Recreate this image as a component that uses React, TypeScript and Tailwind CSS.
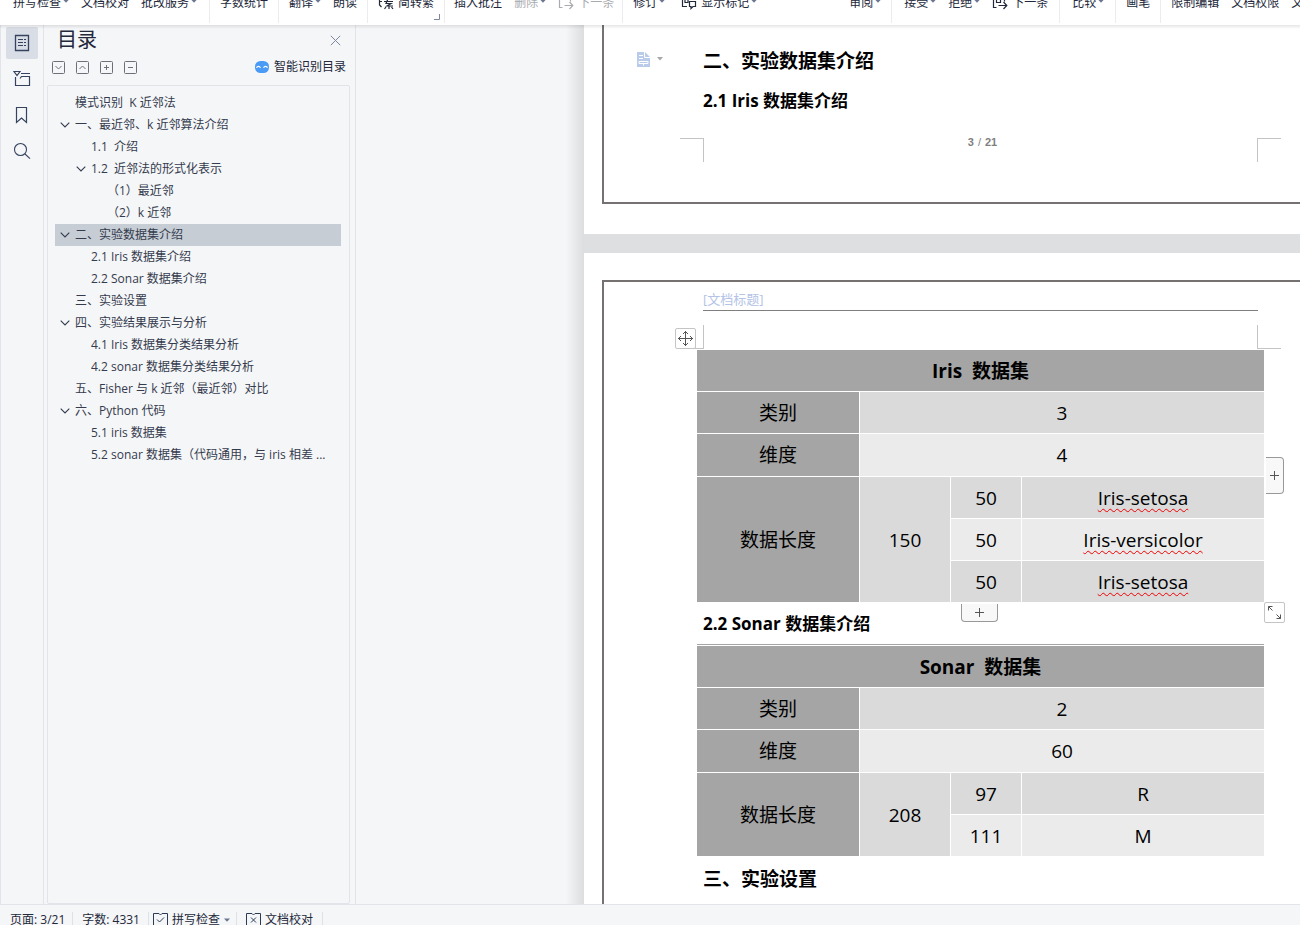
import React, { useState } from 'react';
import clsx from 'clsx';

interface OutlineItem {
  title: string;
  level: 1 | 2 | 3;
  expandable?: boolean;
}

const outline: OutlineItem[] = [
  { title: '模式识别  K 近邻法', level: 1 },
  { title: '一、最近邻、k 近邻算法介绍', level: 1, expandable: true },
  { title: '1.1  介绍', level: 2 },
  { title: '1.2  近邻法的形式化表示', level: 2, expandable: true },
  { title: '（1）最近邻', level: 3 },
  { title: '（2）k 近邻', level: 3 },
  { title: '二、实验数据集介绍', level: 1, expandable: true },
  { title: '2.1 Iris 数据集介绍', level: 2 },
  { title: '2.2 Sonar 数据集介绍', level: 2 },
  { title: '三、实验设置', level: 1 },
  { title: '四、实验结果展示与分析', level: 1, expandable: true },
  { title: '4.1 Iris 数据集分类结果分析', level: 2 },
  { title: '4.2 sonar 数据集分类结果分析', level: 2 },
  { title: '五、Fisher 与 k 近邻（最近邻）对比', level: 1 },
  { title: '六、Python 代码', level: 1, expandable: true },
  { title: '5.1 iris 数据集', level: 2 },
  { title: '5.2 sonar 数据集（代码通用，与 iris 相差 ...', level: 2 },
];

const indent = { 1: 'pl-0', 2: 'pl-4', 3: 'pl-8' };

/* ---------- Icons ---------- */

const Caret = () => (
  <svg width="6" height="4" viewBox="0 0 6 4" className="shrink-0" aria-hidden="true">
    <path d="M0 .5h6L3 3.8z" fill="#6b7590" />
  </svg>
);

const NextIcon = ({ marked = false }: { marked?: boolean }) => (
  <svg width="16" height="16" viewBox="0 0 16 16" fill="none" stroke="currentColor" strokeWidth="1.2" aria-hidden="true">
    <path d="M4.5 12.5h-3v-11h11v5M6.5 10.5h8M11.5 7l3.3 3.5-3.3 3.5" />
    {marked && <path d="M4.5 3.5h4v4h-4z" />}
  </svg>
);

const MarkupIcon = () => (
  <svg width="16" height="16" viewBox="0 0 16 16" fill="none" stroke="currentColor" strokeWidth="1.2" aria-hidden="true">
    <path d="M6 11.5H1.5v-10h13v2M4 4.5h3v3H4zM8.5 6.5h6v5h-2.5l-2 2v-2H8.5z" />
  </svg>
);

const ConvertIcon = () => (
  <svg width="16" height="16" viewBox="0 0 16 16" fill="none" stroke="currentColor" strokeWidth="1.2" aria-hidden="true">
    <path d="M1.5 1v9l2 2M1 6.5h3M6 3.5h9M6 6.5h9M11 1.5 8 8.5h5l-4 2.5h6M11 11v3M8 12l-1.5 2M13.5 12l1.5 2" />
  </svg>
);

const OutlineIcon = () => (
  <svg width="18" height="18" viewBox="0 0 18 18" fill="none" stroke="currentColor" aria-hidden="true">
    <path d="M2.5 1.5h13v15h-13z" strokeWidth="1.3" />
    <path d="M5 5.5h5M11 5.5h2M5 8.5h5M11 8.5h2M5 11.5h5M11 11.5h2" strokeWidth="1.2" />
  </svg>
);

const ChapterIcon = () => (
  <svg width="18" height="18" viewBox="0 0 18 18" fill="none" stroke="currentColor" strokeWidth="1.2" aria-hidden="true">
    <path d="M1 1.5h6l-3 4zM8 3.5h9M2.5 7v8.5h14v-9h-8l-1.5 2" />
  </svg>
);

const BookmarkIcon = () => (
  <svg width="18" height="18" viewBox="0 0 18 18" fill="none" stroke="currentColor" strokeWidth="1.2" aria-hidden="true">
    <path d="M3.5 1.5h10v15l-5-4.5-5 4.5z" />
  </svg>
);

const SearchIcon = () => (
  <svg width="18" height="18" viewBox="0 0 18 18" fill="none" stroke="currentColor" strokeWidth="1.1" aria-hidden="true">
    <circle cx="7.5" cy="7.5" r="6" />
    <path d="m12 12 5 4.7" />
  </svg>
);

const BoxIcon = ({ d }: { d: string }) => (
  <svg width="13" height="13" viewBox="0 0 13 13" fill="none" stroke="#6d7078" aria-hidden="true">
    <rect x=".5" y=".5" width="12" height="12" rx="1" />
    <path d={d} />
  </svg>
);

const SmartIcon = () => (
  <svg width="14" height="12" viewBox="0 0 14 12" aria-hidden="true">
    <rect width="14" height="12" rx="5.5" fill="#4a9bf5" />
    <path d="M1.5 6.8c.8-1.8 3-1.8 4 0M8.5 6.8c1-1.8 3.200-1.800 4 0" stroke="#fff" strokeWidth="1.2" fill="none" />
  </svg>
);

const CheckBookIcon = ({ mark }: { mark: string }) => (
  <svg width="15" height="13" viewBox="0 0 15 13" fill="none" stroke="#2c3a55" aria-hidden="true">
    <path d="M6 .5H.5v12h14V.5H9L7.500 2z" />
    <path d={mark} />
  </svg>
);

/* ---------- Toolbar ---------- */

interface ToolProps {
  label: string;
  caret?: boolean;
  icon?: React.ReactNode;
  muted?: boolean;
  className?: string;
}

const Tool: React.FC<ToolProps> = ({ label, caret, icon, muted, className }) => (
  <button
    type="button"
    className={clsx(
      'flex h-6 shrink-0 items-center whitespace-nowrap',
      muted ? 'text-[#a9abb0]' : 'text-[#23283a]',
      className
    )}
  >
    {icon && <span className="mr-1">{icon}</span>}
    {label}
    {caret && (
      <span className="mb-1 ml-0.5">
        <Caret />
      </span>
    )}
  </button>
);

const ToolGroup = ({ children, className = 'px-[10px]' }: { children: React.ReactNode; className?: string }) => (
  <div className={clsx('flex h-8 shrink-0 gap-3 border-r border-[#ececee]', className)}>{children}</div>
);

const Toolbar = () => (
  <header className="z-20 h-[25px] shrink-0 overflow-hidden bg-white">
    <div className="-mt-[9px] flex">
      <ToolGroup className="pl-[13px] pr-3">
        <Tool label="拼写检查" caret />
        <Tool label="文档校对" />
        <Tool label="批改服务" caret />
      </ToolGroup>
      <ToolGroup>
        <Tool label="字数统计" />
      </ToolGroup>
      <ToolGroup>
        <Tool label="翻译" caret />
        <Tool label="朗读" />
      </ToolGroup>
      <ToolGroup className="relative px-[10px]">
        <Tool label="简转繁" icon={<ConvertIcon />} />
        <svg className="absolute bottom-[3px] right-1" width="6" height="6" viewBox="0 0 6 6" fill="none" stroke="#7d869c" aria-hidden="true">
          <path d="M0 5.5h5.5V0" />
        </svg>
      </ToolGroup>
      <ToolGroup className="pl-[9px] pr-2">
        <Tool label="插入批注" />
        <Tool label="删除" caret muted />
        <Tool label="下一条" icon={<NextIcon />} muted />
      </ToolGroup>
      <ToolGroup>
        <Tool label="修订" caret />
        <Tool label="显示标记" caret icon={<MarkupIcon />} className="ml-1" />
        <Tool label="审阅" caret className="ml-20" />
      </ToolGroup>
      <ToolGroup className="pl-3 pr-[11px]">
        <Tool label="接受" caret />
        <Tool label="拒绝" caret />
        <Tool label="下一条" icon={<NextIcon marked />} />
      </ToolGroup>
      <ToolGroup className="pl-3 pr-[11px]">
        <Tool label="比较" caret />
      </ToolGroup>
      <ToolGroup>
        <Tool label="画笔" />
      </ToolGroup>
      <ToolGroup>
        <Tool label="限制编辑" />
        <Tool label="文档权限" />
        <Tool label="文档认证" />
      </ToolGroup>
    </div>
  </header>
);

/* ---------- Sidebar ---------- */

const railItems = [
  { name: '目录', icon: <OutlineIcon /> },
  { name: '章节', icon: <ChapterIcon /> },
  { name: '书签', icon: <BookmarkIcon /> },
  { name: '查找', icon: <SearchIcon /> },
];

const Rail = () => (
  <nav className="flex w-11 shrink-0 flex-col items-center gap-1 border-x border-[#e2e4ea] pt-0.5">
    {railItems.map((item, i) => (
      <button
        key={item.name}
        type="button"
        aria-label={item.name}
        className={clsx('flex size-8 items-center justify-center text-[#36435f]', i === 0 && 'rounded-xs bg-[#d9dde5]')}
      >
        {item.icon}
      </button>
    ))}
  </nav>
);

const OutlinePanel = () => {
  const [selected, setSelected] = useState(6);

  return (
    <aside className="flex w-[312px] shrink-0 flex-col border-r border-[#e2e4ea]">
      <div className="flex h-[30px] items-center justify-between pl-[13px] pr-[14px]">
        <h1 className="text-xl leading-[30px] text-[#23283a]">目录</h1>
        <button type="button" aria-label="关闭">
          <svg width="11" height="11" viewBox="0 0 11 11" stroke="#7d869c" aria-hidden="true">
            <path d="m.8.8 9.4 9.4M10.2.8.8 10.2" />
          </svg>
        </button>
      </div>
      <div className="flex h-[30px] items-center gap-[11px] pb-1.5 pl-2 pr-[9px]">
        <button type="button" aria-label="展开"><BoxIcon d="m3.5 5 3 3 3-3" /></button>
        <button type="button" aria-label="收起"><BoxIcon d="m3.5 8 3-3 3 3" /></button>
        <button type="button" aria-label="增加"><BoxIcon d="M4 6.5h5M6.5 4v5" /></button>
        <button type="button" aria-label="减少"><BoxIcon d="M4 6.5h5" /></button>
        <button type="button" className="ml-auto flex items-center gap-[5px] text-[#23283a]">
          <SmartIcon />
          智能识别目录
        </button>
      </div>
      <ul className="ml-[3px] mr-[5px] flex-1 overflow-hidden rounded-xs border border-[#e2e4ea] px-[7px] pt-1.5">
        {outline.map((item, i) => (
          <li key={item.title}>
            <button
              type="button"
              onClick={() => setSelected(i)}
              className={clsx(
                'flex h-[22px] w-[286px] items-center text-left text-[#343b4d]',
                indent[item.level],
                selected === i && 'bg-[#c6cdd5]'
              )}
            >
              <span className="flex w-5 shrink-0 justify-center">
                {item.expandable && (
                  <svg width="10" height="6" viewBox="0 0 10 6" fill="none" stroke="#343b4d" strokeWidth="1.1" aria-hidden="true">
                    <path d="m.7.7 4.3 4.3L9.3.7" />
                  </svg>
                )}
              </span>
              <span className="truncate whitespace-pre">{item.title}</span>
            </button>
          </li>
        ))}
      </ul>
    </aside>
  );
};

/* ---------- Document ---------- */

const CropMark = ({ className }: { className: string }) => (
  <div className={clsx('size-6 shrink-0 border-[#c4c4c4]', className)} />
);

interface DataTableProps {
  title: string;
  classes: string;
  dims: string;
  total: string;
  parts: { count: string; name: string; misspelled?: boolean }[];
}

const cell = 'border-white p-0 font-normal';

const DataTable: React.FC<DataTableProps> = ({ title, classes, dims, total, parts }) => (
  <table className="w-[567px] table-fixed border-separate border-spacing-0 text-center text-[19px] leading-6 text-black">
    <colgroup>
      <col className="w-[163px]" />
      <col className="w-[91px]" />
      <col className="w-[71px]" />
      <col />
    </colgroup>
    <thead>
      <tr className="h-[42px]">
        <th colSpan={4} className="whitespace-pre border-b border-white bg-[#a5a5a5] p-0 font-bold">{title}</th>
      </tr>
    </thead>
    <tbody>
      <tr className="h-[42px]">
        <th scope="row" className={clsx(cell, 'border-b border-r bg-[#a5a5a5]')}>类别</th>
        <td colSpan={3} className={clsx(cell, 'border-b bg-[#dadada]')}>{classes}</td>
      </tr>
      <tr className="h-[43px]">
        <th scope="row" className={clsx(cell, 'border-b border-r bg-[#a5a5a5]')}>维度</th>
        <td colSpan={3} className={clsx(cell, 'border-b bg-[#ebebeb]')}>{dims}</td>
      </tr>
      {parts.map((part, i) => {
        const last = i === parts.length - 1;
        const tone = i % 2 === 0 ? 'bg-[#dadada]' : 'bg-[#ebebeb]';
        return (
          <tr key={i} className={last ? 'h-[41px]' : 'h-[42px]'}>
            {i === 0 && (
              <>
                <th scope="row" rowSpan={parts.length} className={clsx(cell, 'border-r bg-[#a5a5a5]')}>数据长度</th>
                <td rowSpan={parts.length} className={clsx(cell, 'border-r bg-[#dadada]')}>{total}</td>
              </>
            )}
            <td className={clsx(cell, 'border-r', tone, !last && 'border-b')}>{part.count}</td>
            <td className={clsx(cell, tone, !last && 'border-b')}>
              <span className={clsx(part.misspelled && 'underline decoration-[#f00000] decoration-wavy decoration-1 underline-offset-3')}>
                {part.name}
              </span>
            </td>
          </tr>
        );
      })}
    </tbody>
  </table>
);

const PlusIcon = () => (
  <svg width="9" height="9" viewBox="0 0 9 9" stroke="#555" aria-hidden="true">
    <path d="M0 4.5h9M4.5 0v9" />
  </svg>
);

const Document = () => (
  <main className="flex min-w-0 flex-1 overflow-hidden">
    <div className="w-[210px] shrink-0" />
    <div className="w-[18px] shrink-0 bg-linear-to-r from-[#f5f6f8] to-[#dcdddf]" />
    <div className="flex min-w-0 flex-1 flex-col gap-[19px] bg-[#dedfe1]">
      <section className="shrink-0 bg-white pb-[30px] pl-[18px]">
        <div className="border-b-2 border-l-2 border-[#767171] pb-10 pt-5">
          <div className="flex items-center">
            <button type="button" aria-label="段落选项" className="flex w-[99px] items-center gap-[7px] pb-1 pl-[33px]">
              <svg width="13" height="15" viewBox="0 0 13 15" aria-hidden="true">
                <path d="M0 0h8l5 5v10H0z" fill="#b9cbe8" />
                <path d="M7.500 0v5.500H13M2 3.5h4M2 6.5h4M2 9.5h9v2H2zM6.500 11.500v2" fill="none" stroke="#fff" />
              </svg>
              <svg width="6" height="4" viewBox="0 0 6 4" aria-hidden="true">
                <path d="M0 0h6L3 3.5z" fill="#a8a8a8" />
              </svg>
            </button>
            <h2 className="text-[19px] font-bold leading-8 text-black">二、实验数据集介绍</h2>
          </div>
          <h3 className="mt-2 pl-[99px] text-[17px] font-bold leading-8 text-black">2.1 Iris 数据集介绍</h3>
          <div className="ml-[76px] mt-[21px] flex w-[601px] justify-between">
            <CropMark className="border-r border-t" />
            <p className="flex h-2 items-center gap-1 pl-1 font-['Liberation_Sans',sans-serif] text-[11px] text-[#7f7f7f]">
              <span className="font-bold">3</span>/<span className="font-bold">21</span>
            </p>
            <CropMark className="border-l border-t" />
          </div>
        </div>
      </section>

      <section className="flex flex-1 flex-col bg-white pl-[18px] pt-[27px]">
        <div className="flex-1 border-l-2 border-t-2 border-[#767171]">
          <div className="ml-[76px] w-[601px]">
            <div className="mx-[23px] border-b border-[#7f7f7f] pb-px pt-2 text-[13px] leading-[19px] text-[#b4c3e6]">[文档标题]</div>
            <div className="mt-3.5 flex justify-between">
              <CropMark className="border-b border-r" />
              <CropMark className="border-b border-l" />
            </div>
            <div className="relative ml-[17px] mt-px w-[567px]">
              <DataTable
                title="Iris  数据集"
                classes="3"
                dims="4"
                total="150"
                parts={[
                  { count: '50', name: 'Iris-setosa', misspelled: true },
                  { count: '50', name: 'Iris-versicolor', misspelled: true },
                  { count: '50', name: 'Iris-setosa', misspelled: true },
                ]}
              />
              {/* Poignées du tableau */}
              <button type="button" aria-label="移动表格" className="absolute -left-[22px] -top-[22px] flex size-[21px] items-center justify-center rounded-xs border border-[#c4c4c4] bg-white">
                <svg width="15" height="15" viewBox="0 0 15 15" fill="none" stroke="#555" aria-hidden="true">
                  <path d="M7.5 0v15M0 7.5h15M5 3l2.5-2.5L10 3M5 12l2.5 2.5L10 12M3 5 .5 7.5 3 10M12 5l2.5 2.5L12 10" />
                </svg>
              </button>
              <button type="button" aria-label="添加列" className="absolute -right-5 top-[107px] flex h-[37px] w-[18px] items-center justify-center rounded-r-sm border border-l-0 border-[#999] bg-[#f8f8f8]">
                <PlusIcon />
              </button>
              <button type="button" aria-label="添加行" className="absolute -bottom-5 left-[264px] flex h-[18px] w-[37px] items-center justify-center rounded-b-sm border border-t-0 border-[#999] bg-[#f8f8f8]">
                <PlusIcon />
              </button>
              <button type="button" aria-label="缩放表格" className="absolute -bottom-[21px] -right-[21px] flex size-[21px] items-center justify-center rounded-xs border border-[#c4c4c4] bg-white">
                <svg width="13" height="13" viewBox="0 0 13 13" fill="none" stroke="#555" aria-hidden="true">
                  <path d="M.5 4.5v-4h4M.5.5l4 4M12.5 8.5v4h-4M12.5 12.5l-4-4" />
                </svg>
              </button>
            </div>
            <h3 className="pl-[23px] pt-0.5 text-[17px] font-bold leading-10 text-black">2.2 Sonar 数据集介绍</h3>
            <div className="ml-[17px] w-[567px] border-t border-[#a5a5a5] pt-px">
              <DataTable
                title="Sonar  数据集"
                classes="2"
                dims="60"
                total="208"
                parts={[
                  { count: '97', name: 'R' },
                  { count: '111', name: 'M' },
                ]}
              />
            </div>
            <h2 className="pl-[23px] text-[19px] font-bold leading-[46px] text-black">三、实验设置</h2>
          </div>
        </div>
      </section>
    </div>
  </main>
);

/* ---------- Status bar ---------- */

const StatusBar = () => (
  <footer className="h-[21px] shrink-0 overflow-hidden border-t border-[#e2e4ea] bg-[#f5f6f8] text-[#23283a]">
    <div className="flex h-[29px] items-center whitespace-nowrap pl-[10px]">
      <span className="border-r border-[#dfe1e7] pr-[7px]">页面: 3/21</span>
      <span className="border-r border-[#dfe1e7] pl-[9px] pr-2">字数: 4331</span>
      <button type="button" className="flex items-center gap-1 border-r border-[#dfe1e7] pl-1 pr-1.5">
        <CheckBookIcon mark="m4 6.5 2.5 2.5 4.5-4.5" />
        拼写检查
        <Caret />
      </button>
      <button type="button" className="flex items-center gap-1 border-r border-[#dfe1e7] px-[9px]">
        <CheckBookIcon mark="m5 4.500 5 5M10 4.500l-5 5" />
        文档校对
      </button>
    </div>
  </footer>
);

const App = () => (
  <div className="flex h-screen flex-col overflow-hidden bg-[#f5f6f8] font-['Open_Sans','Noto_Sans_CJK_SC',sans-serif] text-xs">
    <Toolbar />
    <div className="relative flex min-h-0 flex-1">
      <Rail />
      <OutlinePanel />
      <Document />
      {/* Ombre sous la barre d'outils */}
      <div className="pointer-events-none absolute inset-x-0 top-0 h-1 bg-linear-to-b from-black/10 to-transparent" />
    </div>
    <StatusBar />
  </div>
);

export default App;
